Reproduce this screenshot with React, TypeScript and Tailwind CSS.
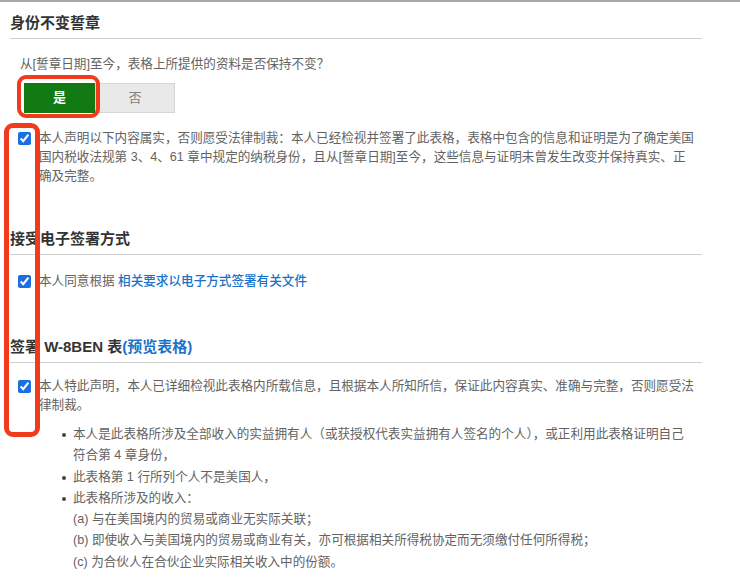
import React from "react";

function Check() {
  return (
    <input
      type="checkbox"
      defaultChecked
      className="m-0 mt-[3px] h-[13px] w-[13px] shrink-0 accent-[#1b6fe0]"
    />
  );
}

function Heading({ children }: { children: React.ReactNode }) {
  return (
    <h2 className="border-b border-[#cfcfcf] pb-[4px] text-[15px] font-bold leading-[22px] text-[#333]">
      {children}
    </h2>
  );
}

export default function App() {
  return (
    <div className="relative h-[580px] w-[740px] overflow-hidden bg-white font-['Liberation_Sans','Noto_Sans_CJK_SC',sans-serif] text-[12.6px] text-[#636363]">
      <div className="h-[2px] bg-[#a8a8a8]" />

      <div className="w-[702px] pl-[10px]">
        {/* 身份不变誓章 */}
        <div className="pt-[10px]">
          <Heading>身份不变誓章</Heading>
        </div>
        <p className="mt-[15px] pl-[10px] leading-[20px]">
          从[誓章日期]至今，表格上所提供的资料是否保持不变？
        </p>
        <div className="ml-[14px] mt-[9px] flex h-[30px]">
          <button className="w-[71px] bg-[#127a12] text-[13px] font-bold text-white">是</button>
          <button className="w-[80px] border border-[#d6d6d6] bg-[#e9e9e9] text-[13px] text-[#808080]">
            否
          </button>
        </div>
        <div className="mt-[16px] flex gap-[8px] pl-[8px] leading-[19px]">
          <Check />
          <p>
            本人声明以下内容属实，否则愿受法律制裁：本人已经检视并签署了此表格，表格中包含的信息和证明是为了确定美国
            <br />
            国内税收法规第 3、4、61 章中规定的纳税身份，且从[誓章日期]至今，这些信息与证明未曾发生改变并保持真实、正
            <br />
            确及完整。
          </p>
        </div>

        {/* 接受电子签署方式 */}
        <div className="mt-[42px]">
          <Heading>接受电子签署方式</Heading>
        </div>
        <div className="mt-[17px] flex gap-[8px] pl-[8px] leading-[19px]">
          <Check />
          <p>
            本人同意根据{" "}
            <a className="font-medium text-[#1a73c8]">相关要求以电子方式签署有关文件</a>
          </p>
        </div>

        {/* 签署 W-8BEN 表 */}
        <div className="mt-[45px]">
          <Heading>
            签署 W-8BEN 表<span className="text-[#1a73c8]">(预览表格)</span>
          </Heading>
        </div>
        <div className="mt-[14px] flex gap-[8px] pl-[8px] leading-[19px]">
          <Check />
          <p>
            本人特此声明，本人已详细检视此表格内所载信息，且根据本人所知所信，保证此内容真实、准确与完整，否则愿受法
            <br />
            律制裁。
          </p>
        </div>
        <ul className="mt-[9px] pl-[63px] leading-[21.3px]">
          <li className="relative">
            <span className="absolute left-[-11px] top-[9px] h-[4px] w-[4px] rounded-full bg-[#444]" />
            本人是此表格所涉及全部收入的实益拥有人（或获授权代表实益拥有人签名的个人），或正利用此表格证明自己
            <br />
            符合第 4 章身份，
          </li>
          <li className="relative">
            <span className="absolute left-[-11px] top-[9px] h-[4px] w-[4px] rounded-full bg-[#444]" />
            此表格第 1 行所列个人不是美国人，
          </li>
          <li className="relative">
            <span className="absolute left-[-11px] top-[9px] h-[4px] w-[4px] rounded-full bg-[#444]" />
            此表格所涉及的收入：
            <div>(a) 与在美国境内的贸易或商业无实际关联；</div>
            <div>(b) 即使收入与美国境内的贸易或商业有关，亦可根据相关所得税协定而无须缴付任何所得税；</div>
            <div>(c) 为合伙人在合伙企业实际相关收入中的份额。</div>
          </li>
        </ul>
      </div>

      {/* annotation boxes */}
      <div className="pointer-events-none absolute left-[17px] top-[75px] h-[43px] w-[83px] rounded-[9px] border-[4px] border-[#f23a1c]" />
      <div className="pointer-events-none absolute left-[4px] top-[123px] h-[314px] w-[36px] rounded-[9px] border-[5px] border-[#f23a1c]" />
    </div>
  );
}
